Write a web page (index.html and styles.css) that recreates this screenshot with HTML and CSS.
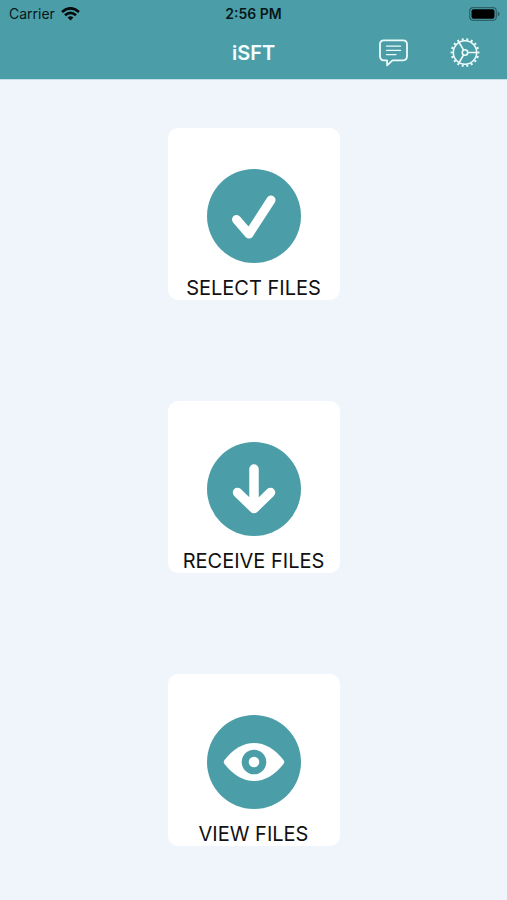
FILE: index.html
```html
<!DOCTYPE html>
<html lang="en">
<head>
<meta charset="utf-8">
<meta name="viewport" content="width=device-width, initial-scale=1">
<title>iSFT</title>
<link rel="stylesheet" href="styles.css">
</head>
<body>
<header class="header">
  <div class="status">
    <div class="carrier">
      <span>Carrier</span>
      <svg width="19" height="14" viewBox="0 0 19 14" fill="none" stroke="#050b0c" stroke-width="2.7" aria-hidden="true">
        <path d="M1 5Q9.500-2.400 18 5"/>
        <path d="M4 8.200Q9.500 3.400 15 8.200"/>
        <path d="M6.600 10.500Q9.500 8.200 12.400 10.500L9.500 13.400Z" fill="#050b0c" stroke="none"/>
      </svg>
    </div>
    <time class="time">2:56 PM</time>
    <svg class="battery" width="31" height="14" viewBox="0 0 31 14" aria-hidden="true">
      <rect x=".7" y=".7" width="26.600" height="12.600" rx="3.500" fill="none" stroke="#2c6268" stroke-width="1.200"/>
      <rect x="2.500" y="2.300" width="23" height="9.400" rx="2" fill="#000"/>
      <path d="M28.700 4.500q2 .8 2 2.500t-2 2.500z" fill="#2c6268"/>
    </svg>
  </div>
  <div class="navbar">
    <h1 class="title">iSFT</h1>
    <div class="actions">
      <button class="icon-button" type="button" aria-label="Messages">
        <svg width="30" height="30" viewBox="0 0 30 30" fill="none" stroke="#eefbfc" stroke-linecap="round" stroke-linejoin="round">
          <path d="M6 2.300H25Q29 2.300 29 6.300V18.300Q29 22.300 25 22.300H14.500L9.100 27.400V22.300H6Q2 22.300 2 18.300V6.300Q2 2.300 6 2.300Z" stroke-width="1.800"/>
          <path d="M8.500 8.200H22.500M8.500 12.400H22.500M8.500 16.600H18" stroke-width="1.300"/>
        </svg>
      </button>
      <button class="icon-button" type="button" aria-label="Settings">
        <svg width="30" height="30" viewBox="0 0 30 30" fill="none" stroke="#eefbfc">
          <circle cx="15" cy="14.500" r="11.700" stroke-width="1.600"/>
          <circle cx="15" cy="14.500" r="13.300" stroke-width="2.200" pathLength="72" stroke-dasharray="1.700 2.300" stroke-dashoffset=".85"/>
          <circle cx="15" cy="14.500" r="2.700" stroke-width="1.600"/>
          <path d="M17.700 14.500H26.500M13.600 12.100L9.200 4.500M13.600 16.900L9.200 24.500" stroke-width="1.600"/>
        </svg>
      </button>
    </div>
  </div>
</header>
<main class="menu">
  <button class="card" type="button">
    <svg width="94" height="94" viewBox="0 0 94 94" aria-hidden="true">
      <circle cx="47" cy="47" r="47" fill="#4b9ea7"/>
      <path d="M29.500 50.500L42 65L64 31" fill="none" stroke="#fff" stroke-width="9" stroke-linecap="round" stroke-linejoin="round"/>
    </svg>
    <span class="label">SELECT FILES</span>
  </button>
  <button class="card" type="button">
    <svg width="94" height="94" viewBox="0 0 94 94" aria-hidden="true">
      <circle cx="47" cy="47" r="47" fill="#4b9ea7"/>
      <path d="M47 27V66M30.500 50.500L47 66.500L63.500 50.500" fill="none" stroke="#fff" stroke-width="9.500" stroke-linecap="round" stroke-linejoin="round"/>
    </svg>
    <span class="label">RECEIVE FILES</span>
  </button>
  <button class="card" type="button">
    <svg width="94" height="94" viewBox="0 0 94 94" aria-hidden="true">
      <circle cx="47" cy="47" r="47" fill="#4b9ea7"/>
      <path d="M17.500 45Q31 28 47 28T76.500 45Q78 47 76.500 49Q63 66 47 66T17.500 49Q16 47 17.500 45Z" fill="#fff"/>
      <circle cx="47" cy="47" r="8.800" fill="none" stroke="#4b9ea7" stroke-width="7"/>
    </svg>
    <span class="label">VIEW FILES</span>
  </button>
</main>
</body>
</html>
```
FILE: styles.css
```css
* {
  box-sizing: border-box;
}

body {
  margin: 0;
  min-height: 100vh;
  background: #f0f4fb;
  font-family: Inter, "Liberation Sans", sans-serif;
}

button {
  padding: 0;
  border: 0;
  font: inherit;
  color: inherit;
  cursor: pointer;
}

svg {
  display: block;
}

.header {
  background: #4b9ea7;
  border-bottom: 1px solid #c4e2e7;
}

.status,
.navbar {
  display: grid;
  grid-template-columns: 1fr auto 1fr;
  align-items: center;
}

.status {
  height: 27px;
  padding: 0 7px;
  font-size: 14px;
  color: #071719;
}

.carrier {
  display: flex;
  align-items: center;
  gap: 6px;
  padding-left: 2px;
}

.time {
  font-size: 14px;
  font-weight: 600;
}

.battery {
  justify-self: end;
}

.navbar {
  height: 52px;
  padding: 0 27px;
}

.title {
  grid-column: 2;
  margin: 0;
  font-size: 20px;
  line-height: 24px;
  font-weight: 600;
  color: #f5ffff;
}

.actions {
  display: flex;
  justify-content: flex-end;
  gap: 42px;
}

.icon-button {
  background: none;
}

.menu {
  display: flex;
  flex-direction: column;
  align-items: center;
  gap: 101px;
  padding: 48px 0;
}

.card {
  display: flex;
  flex-direction: column;
  align-items: center;
  justify-content: flex-end;
  gap: 13px;
  width: 172px;
  height: 172px;
  border-radius: 10px;
  background: #fff;
}

.label {
  font-size: 20px;
  line-height: 24px;
  color: #111;
  white-space: nowrap;
}
```
